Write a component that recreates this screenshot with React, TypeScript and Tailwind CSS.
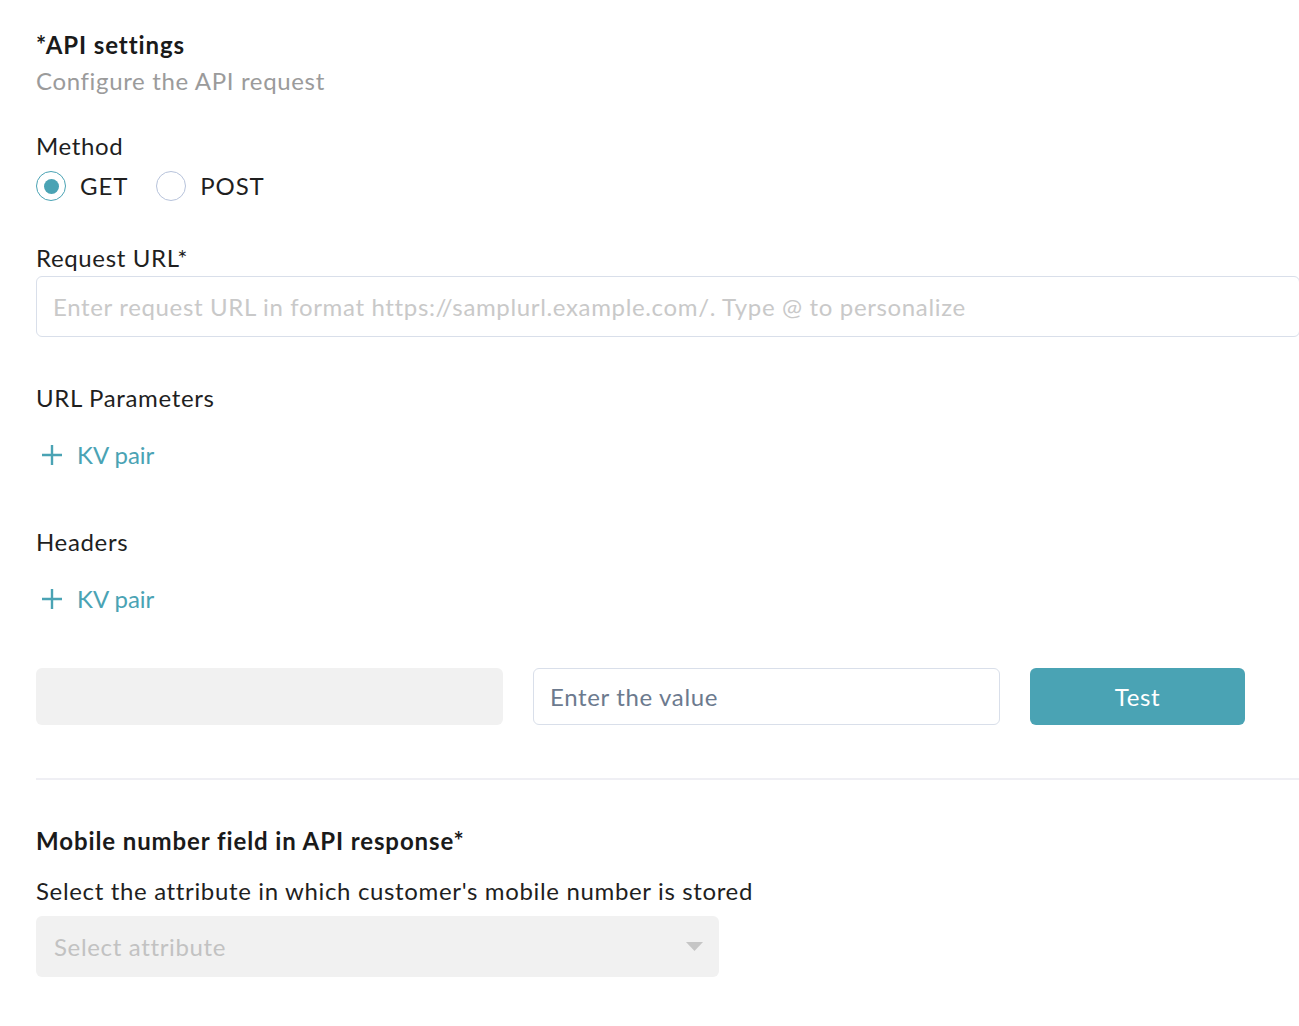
import React, { useState } from 'react'

const teal = '#4aa3b4'

const Plus = () => (
  <svg width="20" height="20" viewBox="0 0 20 20" className="shrink-0">
    <path d="M10 0v20M0 10h20" stroke={teal} strokeWidth={2.4} />
  </svg>
)

const Radio: React.FC<{ label: string; checked: boolean; onClick: () => void }> = ({ label, checked, onClick }) => (
  <button onClick={onClick} className="flex items-center gap-[14px] h-[36px]">
    <span
      className={`w-[30px] h-[30px] rounded-full border-[1.5px] flex items-center justify-center ${
        checked ? 'border-[#4aa3b4]' : 'border-[#b7c3db]'
      }`}
    >
      {checked && <span className="w-[15px] h-[15px] rounded-full bg-[#4aa3b4]" />}
    </span>
    <span className="text-[24px] leading-[36px] text-[#1f1f1f] tracking-[0.9px]">{label}</span>
  </button>
)

const KvPair = () => (
  <button
    className="flex items-center gap-[15px] h-[36px] pl-[6px] text-[24px] leading-[36px] tracking-normal"
    style={{ color: teal }}
  >
    <Plus />
    KV pair
  </button>
)

export default function App() {
  const [method, setMethod] = useState<'GET' | 'POST'>('GET')

  return (
    <div
      className="w-full overflow-hidden bg-white min-h-[1026px]"
      style={{ fontFamily: 'Lato, "Noto Sans", sans-serif' }}
    >
      <div className="w-[1300px] pl-[36px] pt-[27px] text-[#1f1f1f] tracking-[0.65px]">
        <h2 className="text-[24px] leading-[36px] font-bold text-[#1a1a1a] tracking-[0.9px]">*API settings</h2>
        <p className="text-[24px] leading-[36px] text-[#9b9b9b]">Configure the API request</p>

        <div className="mt-[29px] text-[24px] leading-[36px]">Method</div>
        <div className="mt-[4px] flex items-center gap-[28px]">
          <Radio label="GET" checked={method === 'GET'} onClick={() => setMethod('GET')} />
          <Radio label="POST" checked={method === 'POST'} onClick={() => setMethod('POST')} />
        </div>

        <div className="mt-[36px] text-[24px] leading-[36px]">Request URL*</div>
        <input
          className="w-full h-[61px] border border-[#d9dfea] rounded-[6px] px-[16px] text-[24px] tracking-[0.65px] placeholder:text-[#c9c9c9] outline-none"
          placeholder="Enter request URL in format https://samplurl.example.com/. Type @ to personalize"
        />

        <div className="mt-[43px] text-[24px] leading-[36px]">URL Parameters</div>
        <div className="mt-[21px]">
          <KvPair />
        </div>

        <div className="mt-[51px] text-[24px] leading-[36px]">Headers</div>
        <div className="mt-[21px]">
          <KvPair />
        </div>

        <div className="mt-[51px] flex gap-[30px]">
          <div className="w-[467px] h-[57px] rounded-[6px] bg-[#f1f1f1]" />
          <input
            className="w-[467px] h-[57px] border border-[#d9dfea] rounded-[6px] px-[16px] text-[24px] tracking-[0.65px] placeholder:text-[#6c7a8e] outline-none"
            placeholder="Enter the value"
          />
          <button className="w-[215px] h-[57px] rounded-[6px] bg-[#4aa3b4] text-white text-[24px]">Test</button>
        </div>

        <div className="mt-[53px] h-[2px] bg-[#efeff4]" />

        <h3 className="mt-[43px] text-[24px] leading-[36px] font-bold text-[#1a1a1a] tracking-[0.9px]">
          Mobile number field in API response*
        </h3>
        <div className="mt-[14px] text-[24px] leading-[36px]">
          Select the attribute in which customer's mobile number is stored
        </div>
        <div className="mt-[7px] w-[683px] h-[61px] rounded-[6px] bg-[#f1f1f1] flex items-center justify-between pl-[18px] pr-[16px]">
          <span className="text-[24px] text-[#c2c2c2]">Select attribute</span>
          <svg width="17" height="9" viewBox="0 0 17 9">
            <path d="M0 0h17L8.5 9z" fill="#c6c6c6" />
          </svg>
        </div>
      </div>
    </div>
  )
}
